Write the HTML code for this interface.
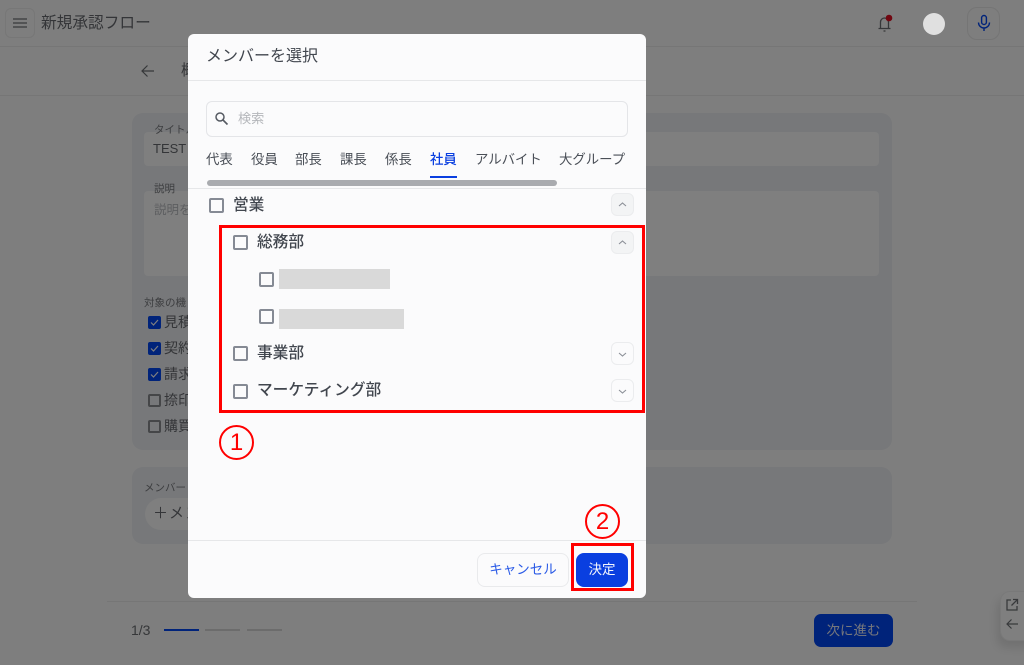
<!DOCTYPE html>
<html lang="ja"><head><meta charset="utf-8"><title>メンバーを選択</title>
<style>
html,body{margin:0;padding:0;width:1024px;height:665px;overflow:hidden;background:#fcfcfc}
body{position:relative;font-family:"Liberation Sans","Noto Sans CJK JP",sans-serif;color:#3c4148}
.a{position:absolute;box-sizing:border-box;white-space:nowrap}
.t{line-height:20px;height:20px}
.d{color:#686b70}
.cb{width:15px;height:15px;border:2px solid #858a94;border-radius:2px;background:#fbfbfc}
.bcb{width:13px;height:13px;border:2px solid #8a8c90;border-radius:2px}
.bck{width:13px;height:13px;background:#0046f4;border-radius:2px}
.chev{width:23px;height:23px;border:1px solid #ebecee;border-radius:6px;background:#fbfbfc}
.up{background:#f3f4f5}
.tab{font-size:13.4px;top:150px;color:#4a4f57}
.grp{font-size:15.7px;font-weight:500;color:#41464e}
.red{border:3px solid #f00}
.num{border:2px solid #f00;border-radius:50%;width:35px;height:35px;color:#f00;text-align:center;font-size:24px;line-height:31px;font-family:"Liberation Sans",sans-serif;background:#fbfbfc}
</style></head><body>

<!-- underlying page -->
<div class="a" style="left:0;top:46px;width:1024px;height:1px;background:#ececec"></div>
<div class="a" style="left:0;top:95px;width:1024px;height:1px;background:#ececec"></div>
<div class="a" style="left:5px;top:8px;width:30px;height:30px;border:1px solid #eee;border-radius:6px"></div>
<svg class="a" style="left:12px;top:17px" width="16" height="12" viewBox="0 0 16 12"><path d="M1 2h14M1 6h14M1 10h14" stroke="#707377" stroke-width="1.2"/></svg>
<div class="a t d" style="left:41px;top:13px;font-size:15.7px;line-height:22px">新規承認フロー</div>
<svg class="a" style="left:140px;top:63px" width="16" height="16" viewBox="0 0 16 16"><path d="M14 8H2M7.5 2.5L2 8l5.5 5.5" fill="none" stroke="#6c6f73" stroke-width="1.2"/></svg>
<div class="a t d" style="left:181px;top:61px;font-size:15px">概</div>
<svg class="a" style="left:876px;top:13px" width="20" height="20" viewBox="0 0 20 20"><path d="M2.5 15.5h12M4.5 15.5V9a4 4 0 0 1 8 0v6.5M7.5 18h2" fill="none" stroke="#6c6f73" stroke-width="1.3"/><circle cx="13" cy="5" r="3.3" fill="#e20d20"/></svg>
<div class="a" style="left:967px;top:7px;width:33px;height:33px;border:1px solid #eaeaea;border-radius:10px"></div>
<svg class="a" style="left:976px;top:14px" width="16" height="18" viewBox="0 0 16 18"><rect x="5.6" y="1.5" width="4.8" height="9" rx="2.4" fill="none" stroke="#0046f4" stroke-width="1.4"/><path d="M2.5 8.5a5.5 5.5 0 0 0 11 0M8 14V17" fill="none" stroke="#0046f4" stroke-width="1.4"/></svg>

<div class="a" style="left:132px;top:113px;width:760px;height:337px;background:#eef0f4;border-radius:11px"></div>
<div class="a" style="left:132px;top:467px;width:760px;height:77px;background:#eef0f4;border-radius:11px"></div>
<div class="a" style="left:144px;top:132px;width:735px;height:34px;background:#fefefe;border-radius:4px"></div>
<div class="a" style="left:144px;top:191px;width:735px;height:85px;background:#fefefe;border-radius:4px"></div>
<div class="a t" style="left:154px;top:120px;font-size:10.5px;color:#7a7c80">タイトル</div>
<div class="a t d" style="left:153px;top:139px;font-size:13px">TEST</div>
<div class="a t" style="left:154px;top:179px;font-size:10.5px;color:#7a7c80">説明</div>
<div class="a t" style="left:154px;top:200px;font-size:12.5px;color:#babcc0">説明を</div>
<div class="a t" style="left:144px;top:293px;font-size:10.5px;color:#7a7c80">対象の機</div>
<div class="a bck" style="left:148px;top:316px"></div><div class="a t d" style="left:164px;top:312px;font-size:14px">見積</div>
<div class="a bck" style="left:148px;top:342px"></div><div class="a t d" style="left:164px;top:338px;font-size:14px">契約</div>
<div class="a bck" style="left:148px;top:368px"></div><div class="a t d" style="left:164px;top:364px;font-size:14px">請求</div>
<svg class="a" style="left:148px;top:316px" width="13" height="65" viewBox="0 0 13 65"><path d="M3 6.5l2.5 2.5L10 4M3 32.5l2.5 2.5L10 30M3 58.5l2.5 2.5L10 56" fill="none" stroke="#fff" stroke-width="1.2"/></svg>
<div class="a bcb" style="left:148px;top:394px"></div><div class="a t d" style="left:164px;top:390px;font-size:14px">捺印</div>
<div class="a bcb" style="left:148px;top:420px"></div><div class="a t d" style="left:164px;top:416px;font-size:14px">購買</div>
<div class="a t" style="left:144px;top:478px;font-size:10.5px;color:#7a7c80">メンバー</div>
<div class="a" style="left:145px;top:498px;width:100px;height:32px;background:#fefefe;border-radius:16px"></div>
<div class="a t d" style="left:153px;top:504px;font-size:15px;letter-spacing:1px">＋メン</div>

<div class="a" style="left:107px;top:601px;width:810px;height:1px;background:#ececec"></div>
<div class="a t" style="left:131px;top:620px;font-size:14px;color:#6c6f73">1/3</div>
<div class="a" style="left:164px;top:629px;width:35px;height:2px;background:#0046f4"></div>
<div class="a" style="left:205px;top:629px;width:35px;height:2px;background:#d8d8d8"></div>
<div class="a" style="left:247px;top:629px;width:35px;height:2px;background:#d8d8d8"></div>
<div class="a t" style="left:814px;top:614px;width:79px;height:33px;background:#0046f4;border-radius:7px;color:#eceff8;font-size:13.5px;line-height:33px;text-align:center">次に進む</div>
<div class="a" style="left:1000px;top:591px;width:40px;height:50px;background:#fff;border:1px solid #f2f2f2;border-radius:10px;box-shadow:-3px 7px 9px rgba(0,0,0,.1)"></div>
<svg class="a" style="left:1005px;top:598px" width="14" height="14" viewBox="0 0 14 14"><path d="M6 2H2v10h10V8M8 1.5h4.5V6M12.5 1.5L6.5 7.5" fill="none" stroke="#707377" stroke-width="1.3"/></svg>
<svg class="a" style="left:1005px;top:617px" width="14" height="14" viewBox="0 0 14 14"><path d="M13 7H2M6.5 2.5L2 7l4.5 4.5" fill="none" stroke="#707377" stroke-width="1.2"/></svg>

<!-- scrim -->
<div class="a" style="left:0;top:0;width:1024px;height:665px;background:rgba(0,0,0,.5)"></div>
<div class="a" style="left:923px;top:13px;width:22px;height:22px;border-radius:50%;background:#e0e0e0"></div>

<!-- modal -->
<div class="a" style="left:188px;top:34px;width:458px;height:564px;background:#fbfbfc;border-radius:6px"></div>
<div class="a t" style="left:206px;top:47px;font-size:16px;color:#41464e">メンバーを選択</div>
<div class="a" style="left:188px;top:80px;width:458px;height:1px;background:#e6e7e9"></div>
<div class="a" style="left:206px;top:101px;width:422px;height:36px;border:1px solid #e4e5e8;border-radius:6px"></div>
<svg class="a" style="left:214px;top:111px" width="15" height="15" viewBox="0 0 15 15"><circle cx="6" cy="6" r="4" fill="none" stroke="#555a62" stroke-width="1.5"/><path d="M9 9l4.5 4.5" stroke="#555a62" stroke-width="1.6"/></svg>
<div class="a t" style="left:238px;top:109px;font-size:13.2px;color:#b5b7bb">検索</div>

<div class="a t tab" style="left:206px">代表</div>
<div class="a t tab" style="left:251px">役員</div>
<div class="a t tab" style="left:295px">部長</div>
<div class="a t tab" style="left:340px">課長</div>
<div class="a t tab" style="left:385px">係長</div>
<div class="a t tab" style="left:430px;color:#0a3fe0;font-weight:500">社員</div>
<div class="a t tab" style="left:475px">アルバイト</div>
<div class="a t tab" style="left:559px">大グループ</div>
<div class="a" style="left:430px;top:176px;width:27px;height:2px;background:#0a3fe0"></div>
<div class="a" style="left:207px;top:180px;width:350px;height:6px;border-radius:3px;background:#a9abaf"></div>
<div class="a" style="left:188px;top:188px;width:458px;height:1px;background:#e6e7e9"></div>

<div class="a cb" style="left:209px;top:198px"></div>
<div class="a t grp" style="left:233px;top:196px">営業</div>
<div class="a chev up" style="left:611px;top:193px"></div>
<div class="a cb" style="left:233px;top:235px"></div>
<div class="a t grp" style="left:257px;top:233px">総務部</div>
<div class="a chev up" style="left:611px;top:231px"></div>
<div class="a cb" style="left:259px;top:272px"></div>
<div class="a" style="left:279px;top:269px;width:111px;height:20px;background:#d9d9d9"></div>
<div class="a cb" style="left:259px;top:309px"></div>
<div class="a" style="left:279px;top:309px;width:125px;height:20px;background:#d9d9d9"></div>
<div class="a cb" style="left:233px;top:346px"></div>
<div class="a t grp" style="left:257px;top:344px">事業部</div>
<div class="a chev" style="left:611px;top:342px"></div>
<div class="a cb" style="left:233px;top:384px"></div>
<div class="a t grp" style="left:257px;top:381px">マーケティング部</div>
<div class="a chev" style="left:611px;top:379px"></div>
<svg class="a" style="left:611px;top:193px" width="23" height="210" viewBox="0 0 23 210"><path d="M8 13l3.5-3 3.5 3M8 51l3.5-3 3.5 3M8 160l3.5 3 3.5-3M8 197l3.5 3 3.5-3" fill="none" stroke="#8c9098" stroke-width="1.1"/></svg>

<div class="a red" style="left:219px;top:225px;width:426px;height:188px"></div>
<div class="a num" style="left:219px;top:425px">1</div>

<div class="a" style="left:188px;top:540px;width:458px;height:1px;background:#e6e7e9"></div>
<div class="a t" style="left:477px;top:553px;width:92px;height:34px;border:1px solid #e9eaec;border-radius:8px;background:#fbfbfc;color:#2a5ae6;font-size:13.5px;line-height:32px;text-align:center">キャンセル</div>
<div class="a t" style="left:576px;top:553px;width:52px;height:34px;background:#0a3fe0;border-radius:8px;color:#f4f6fd;font-size:13.5px;line-height:34px;text-align:center">決定</div>
<div class="a red" style="left:571px;top:543px;width:63px;height:48px"></div>
<div class="a num" style="left:585px;top:504px;background:none">2</div>
</body></html>
